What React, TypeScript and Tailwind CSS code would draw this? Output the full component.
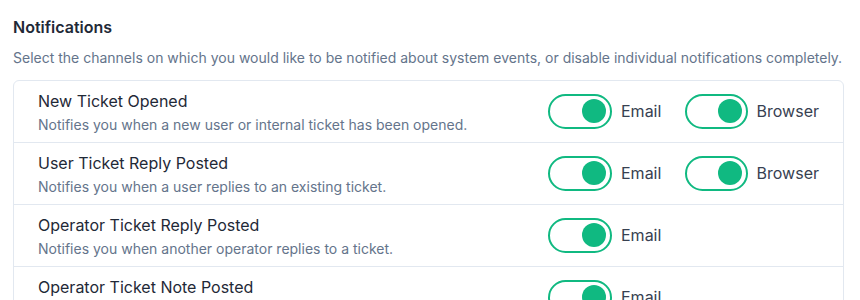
import React from "react";

type Row = { title: string; desc: string; email: boolean; browser: boolean };

const rows: Row[] = [
  { title: "New Ticket Opened", desc: "Notifies you when a new user or internal ticket has been opened.", email: true, browser: true },
  { title: "User Ticket Reply Posted", desc: "Notifies you when a user replies to an existing ticket.", email: true, browser: true },
  { title: "Operator Ticket Reply Posted", desc: "Notifies you when another operator replies to a ticket.", email: true, browser: false },
  { title: "Operator Ticket Note Posted", desc: "Notifies you when another operator adds a note to a ticket.", email: true, browser: false },
];

function Toggle({ label }: { label: string }) {
  return (
    <div className="flex items-center">
      <div className="flex h-[35px] w-[64px] items-center justify-end rounded-full border-2 border-[#10b981] bg-white pr-[4px]">
        <div className="h-[24px] w-[24px] rounded-full bg-[#10b981]" />
      </div>
      <span className="ml-[9px] text-[16px] leading-[22px] text-[#374151]">{label}</span>
    </div>
  );
}

export default function App() {
  return (
    <div className="h-[300px] w-[860px] overflow-hidden bg-white px-[13px] pt-[16px]" style={{ fontFamily: "Inter, 'Noto Sans', sans-serif" }}>
      <h2 className="text-[16px] font-semibold leading-[22px] text-[#1f2937]">Notifications</h2>
      <p className="mt-[10px] text-[14px] leading-[20px] text-[#64748b]">
        Select the channels on which you would like to be notified about system events, or disable individual notifications completely.
      </p>
      <div className="mt-[12px] w-[831px] rounded-md border border-[#e2e8f0]">
        {rows.map((r) => (
          <div key={r.title} className="flex items-center border-b border-[#e2e8f0] pl-[24px] pr-[24px] pt-[9px] pb-[7px]">
            <div className="flex-1">
              <div className="text-[16px] leading-[22px] text-[#1f2937]">{r.title}</div>
              <div className="mt-[3px] text-[14px] leading-[20px] text-[#64748b]">{r.desc}</div>
            </div>
            <div className="mb-[3px] w-[137px]">{r.email && <Toggle label="Email" />}</div>
            <div className="mb-[3px] w-[134px]">{r.browser && <Toggle label="Browser" />}</div>
          </div>
        ))}
      </div>
    </div>
  );
}
